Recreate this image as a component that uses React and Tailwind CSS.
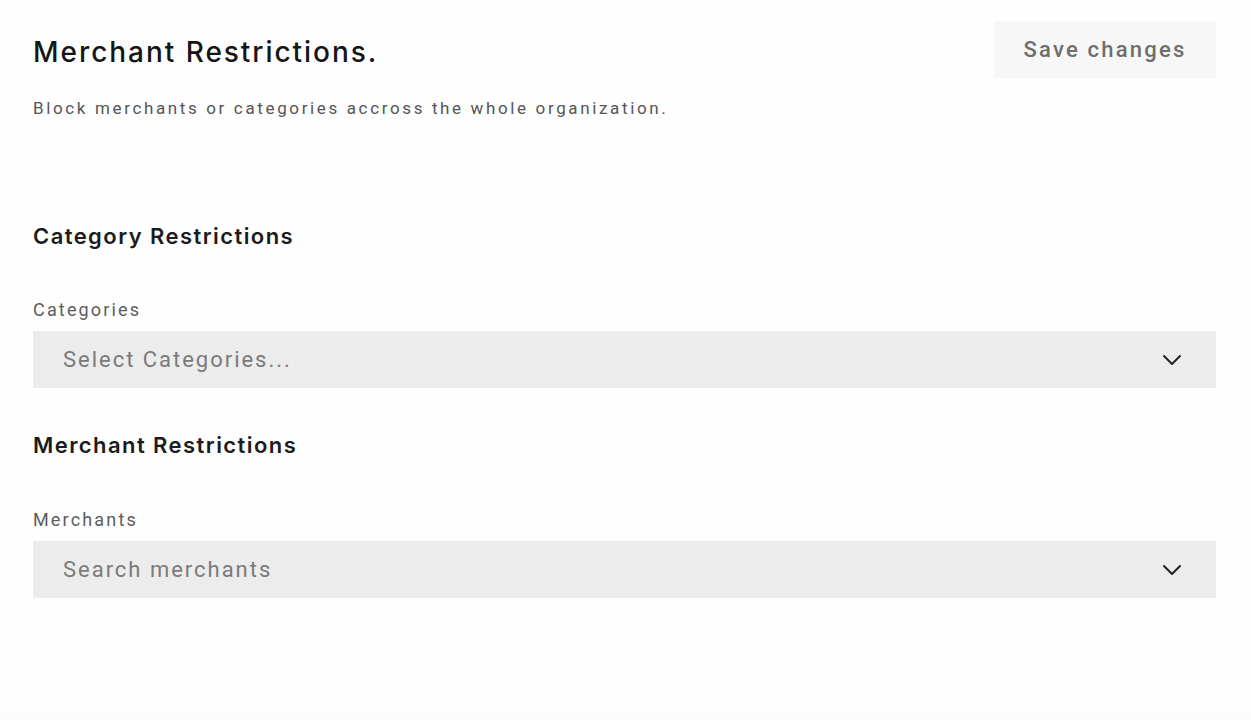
function Chevron() {
  return (
    <svg width="20" height="12" viewBox="0 0 20 12" fill="none" className="shrink-0">
      <path d="M2 2L10 10L18 2" stroke="#222" strokeWidth="2" strokeLinecap="round" strokeLinejoin="round" />
    </svg>
  );
}

function SelectField({ label, placeholder }) {
  return (
    <div className="flex flex-col">
      <label className="text-[18px] leading-[22px] tracking-[0.12em] text-[#5c5c5c] font-['Roboto',sans-serif]">
        {label}
      </label>
      <button
        type="button"
        className="mt-[10px] flex h-[57px] w-full items-center justify-between bg-[#ececec] pl-[30px] pr-[34px] text-left"
      >
        <span className="text-[22px] tracking-[0.09em] text-[#7a7a7a] font-['Roboto',sans-serif]">
          {placeholder}
        </span>
        <Chevron />
      </button>
    </div>
  );
}

export default function App() {
  return (
    <div className="flex min-h-[720px] flex-col bg-[#fefefe]">
      <div className="flex-1 pl-[33px] pr-[35px] pt-[21px]">
        <div className="flex items-start justify-between">
          <div className="pt-[14px]">
            <h1 className="text-[28px] leading-[34px] font-medium tracking-[0.07em] text-[#151515] font-['Inter',sans-serif]">
              Merchant Restrictions.
            </h1>
            <p className="mt-[29px] text-[17px] leading-[20px] tracking-[0.155em] text-[#555] font-['Roboto',sans-serif]">
              Block merchants or categories accross the whole organization.
            </p>
          </div>
          <button
            type="button"
            className="h-[57px] w-[222px] bg-[#f7f7f7] text-[22px] font-medium tracking-[0.1em] text-[#6e6e6e] font-['Roboto',sans-serif]"
          >
            Save changes
          </button>
        </div>

        <section className="mt-[104px]">
          <h2 className="text-[22px] leading-[28px] font-semibold tracking-[0.065em] text-[#1c1c1c] font-['Inter',sans-serif]">
            Category Restrictions
          </h2>
          <div className="mt-[49px]">
            <SelectField label="Categories" placeholder="Select Categories..." />
          </div>
        </section>

        <section className="mt-[43px]">
          <h2 className="text-[22px] leading-[28px] font-semibold tracking-[0.065em] text-[#1c1c1c] font-['Inter',sans-serif]">
            Merchant Restrictions
          </h2>
          <div className="mt-[50px]">
            <SelectField label="Merchants" placeholder="Search merchants" />
          </div>
        </section>
      </div>
      <div className="h-[7px] bg-[#fbfbfb]" />
    </div>
  );
}
